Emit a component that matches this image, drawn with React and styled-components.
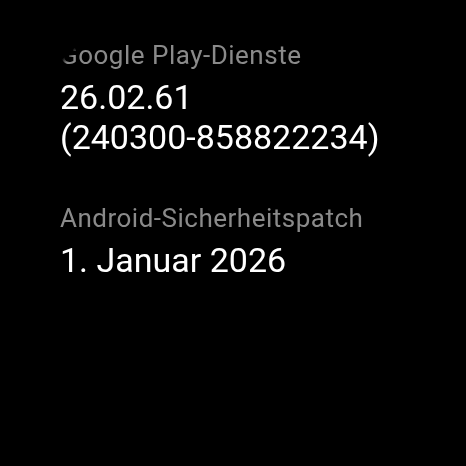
import React from 'react'
import styled, { createGlobalStyle } from 'styled-components'

const Global = createGlobalStyle`
  html, body {
    margin: 0;
    padding: 0;
    background: #000;
  }
  body {
    font-family: Roboto, "Noto Sans", sans-serif;
  }
`

const Screen = styled.div`
  width: 466px;
  height: 466px;
  background: #000;
  overflow: hidden;
  -webkit-mask-image: radial-gradient(circle at 233px 233px, #000 238px, transparent 244px);
  mask-image: radial-gradient(circle at 233px 233px, #000 238px, transparent 244px);
`

const List = styled.div`
  display: flex;
  flex-direction: column;
  gap: 46px;
  padding: 40px 0 0 60px;
`

const Item = styled.div`
  display: flex;
  flex-direction: column;
  gap: 7px;
`

const Label = styled.div`
  color: #8a8a8a;
  font-size: 26px;
  line-height: 30px;
  letter-spacing: 0.5px;
`

const Value = styled.div`
  color: #fff;
  font-size: 34px;
  line-height: 40px;
`

const items = [
  { label: 'Google Play-Dienste', value: ['26.02.61', '(240300-858822234)'] },
  { label: 'Android-Sicherheitspatch', value: ['1. Januar 2026'] },
]

export default function App() {
  return (
    <>
      <Global />
      <Screen>
        <List>
          {items.map(item => (
            <Item key={item.label}>
              <Label>{item.label}</Label>
              <Value>
                {item.value.map(line => <div key={line}>{line}</div>)}
              </Value>
            </Item>
          ))}
        </List>
      </Screen>
    </>
  )
}
